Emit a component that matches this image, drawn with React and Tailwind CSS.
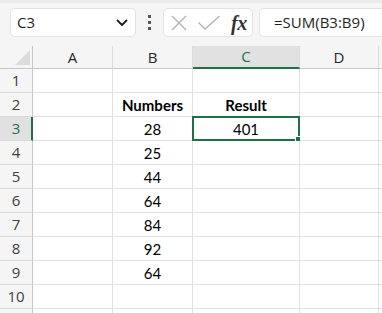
import React from "react";

const cols = [
  { name: "A", w: "w-[80px]" },
  { name: "B", w: "w-[80px]" },
  { name: "C", w: "w-[107px]" },
  { name: "D", w: "w-[79px]" },
];

const data = {
  2: { B: { t: "Numbers", b: true }, C: { t: "Result", b: true } },
  3: { B: { t: "28" }, C: { t: "401" } },
  4: { B: { t: "25" } },
  5: { B: { t: "44" } },
  6: { B: { t: "64" } },
  7: { B: { t: "84" } },
  8: { B: { t: "92" } },
  9: { B: { t: "64" } },
};

function Toolbar() {
  return (
    <div className="h-[46px] bg-[#f5f5f5] border-t-[3px] border-[#ececec] flex items-start pt-[5px] pl-[10px] font-['Open_Sans',sans-serif]">
      <div className="w-[126px] h-[29px] bg-white border border-[#e3e3e3] rounded-[5px] flex items-center justify-between pl-[6px] pr-[6px] shrink-0">
        <span className="text-[15px] text-[#1f1f1f] leading-none">C3</span>
        <svg width="12" height="8" viewBox="0 0 12 8" className="mr-[1px]">
          <path d="M1.5 1.5 L6 6 L10.5 1.5" fill="none" stroke="#1f1f1f" strokeWidth="1.8" strokeLinecap="round" strokeLinejoin="round" />
        </svg>
      </div>
      <div className="w-[27px] h-[29px] flex flex-col items-center justify-center gap-[3px] shrink-0">
        <div className="w-[3px] h-[3px] bg-[#555]" />
        <div className="w-[3px] h-[3px] bg-[#555]" />
        <div className="w-[3px] h-[3px] bg-[#555]" />
      </div>
      <div className="w-[90px] h-[29px] bg-white border border-[#e3e3e3] rounded-[5px] flex items-center pl-[6px] shrink-0">
        <svg width="18" height="18" viewBox="0 0 18 18">
          <path d="M2 2 L16 16 M16 2 L2 16" stroke="#b0b0b0" strokeWidth="1.3" fill="none" />
        </svg>
        <svg width="24" height="16" viewBox="0 0 24 16" className="ml-[9px]">
          <path d="M1.5 7.5 L8 14 L22.5 1" stroke="#b0b0b0" strokeWidth="1.3" fill="none" />
        </svg>
        <span className="ml-[10px] font-['Liberation_Serif',serif] italic font-bold text-[20px] text-[#333] leading-none tracking-[-0.5px]">fx</span>
      </div>
      <div className="flex-1 h-[29px] bg-white border border-[#e3e3e3] border-r-0 rounded-l-[5px] ml-[6px] flex items-center pl-[14px]">
        <span className="text-[15px] text-[#1f1f1f] leading-none whitespace-nowrap">=SUM(B3:B9)</span>
      </div>
    </div>
  );
}

function HeaderRow() {
  return (
    <div className="flex h-[23px] font-['Open_Sans',sans-serif]">
      <div className="w-[33px] shrink-0 bg-[#f5f5f5] border-r border-b border-[#c8c8c8] relative overflow-hidden">
        <svg width="33" height="23" viewBox="0 0 33 23" className="absolute inset-0">
          <path d="M30 4 L30 19 L15 19 Z" fill="#dcdcdc" />
        </svg>
      </div>
      {cols.map((c) => {
        const sel = c.name === "C";
        return (
          <div
            key={c.name}
            className={
              "shrink-0 " +
              c.w +
              " flex items-center justify-center text-[15px] leading-none border-r border-[#dadada] " +
              (sel
                ? "bg-[#e1e1e1] text-[#1e7145] border-b-2 border-b-[#1e7145]"
                : "bg-[#f5f5f5] text-[#262626] border-b border-b-[#c8c8c8]")
            }
          >
            {c.name}
          </div>
        );
      })}
      <div className="flex-1 bg-[#f5f5f5] border-b border-[#c8c8c8]" />
    </div>
  );
}

function Row({ n, label = true }) {
  const sel = n === 3;
  const row = data[n] || {};
  return (
    <div className="flex h-[24px]">
      <div
        className={
          "w-[33px] shrink-0 flex items-center justify-center text-[15px] font-['Open_Sans',sans-serif] leading-none border-b border-[#dadada] " +
          (sel
            ? "bg-[#e1e1e1] text-[#1e7145] border-r-2 border-r-[#1e7145] pl-[1px]"
            : "bg-[#f5f5f5] text-[#404040] border-r border-r-[#c8c8c8]")
        }
      >
        {label ? n : null}
      </div>
      {cols.map((c) => {
        const cell = row[c.name];
        const active = sel && c.name === "C";
        return (
          <div
            key={c.name}
            className={
              "shrink-0 " +
              c.w +
              " relative bg-white border-r border-b border-[#e1e1e1] flex items-end justify-center pb-[1px] text-[15px] leading-[20px] font-['Lato',sans-serif] text-black " +
              (cell && cell.b ? "font-bold" : "")
            }
          >
            {cell ? cell.t : null}
            {active && (
              <>
                <div className="absolute left-[-1px] top-[-1px] right-[-1px] bottom-[-1px] border-2 border-[#1e7145] pointer-events-none" />
                <div className="absolute right-[-4px] bottom-[-4px] w-[6px] h-[6px] bg-[#1e7145] border border-white box-content" />
              </>
            )}
          </div>
        );
      })}
      <div className="flex-1 bg-white border-b border-[#e1e1e1]" />
    </div>
  );
}

export default function App() {
  return (
    <div className="w-[382px] h-[313px] overflow-hidden bg-white">
      <Toolbar />
      <HeaderRow />
      {[1, 2, 3, 4, 5, 6, 7, 8, 9, 10].map((n) => (
        <Row key={n} n={n} />
      ))}
      <Row n={11} label={false} />
    </div>
  );
}
